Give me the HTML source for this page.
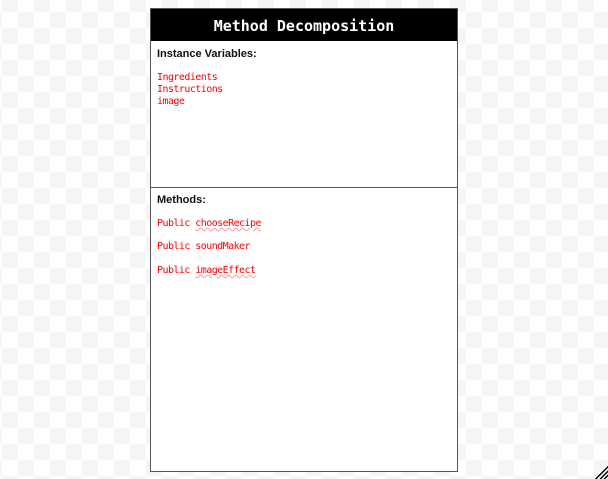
<!DOCTYPE html>
<html><head><style>
html,body{margin:0;padding:0}
body{width:608px;height:479px;position:relative;overflow:hidden;
background-color:#fff;
background-image:linear-gradient(45deg,#f5f5f5 25%,transparent 25%,transparent 75%,#f5f5f5 75%),linear-gradient(45deg,#f5f5f5 25%,transparent 25%,transparent 75%,#f5f5f5 75%);
background-size:32px 32px;background-position:2px 12px,18px 28px;}
.box{position:absolute;left:150px;top:8px;width:306px;height:462px;border:1px solid #555;background:#fff}
.hd{height:32px;background:#000;color:#fff;font:bold 15px "DejaVu Sans Mono","Liberation Mono",monospace;text-align:center;line-height:34px}
.sec{position:absolute;left:0;right:0;padding-left:6px}
.t{font:bold 11px "Liberation Sans",sans-serif;color:#111}
.r{font:10px "DejaVu Sans Mono","Liberation Mono",monospace;color:#f00;position:absolute;left:6px;letter-spacing:-0.55px}
.u{text-decoration:underline wavy #f99;text-decoration-thickness:1px}
.div{position:absolute;left:0;right:0;top:178px;border-top:1px solid #555}
.hatch{position:absolute;right:0;bottom:0;width:14px;height:14px;background:repeating-linear-gradient(135deg,#fff 0 1.5px,#000 1.5px 3px);clip-path:polygon(100% 0,100% 100%,0 100%)}
</style></head><body>
<div class="box">
<div class="hd">Method Decomposition</div>
<div class="sec t" style="top:39px">Instance Variables:</div>
<div class="r" style="top:63px">Ingredients</div>
<div class="r" style="top:75px">Instructions</div>
<div class="r" style="top:87px">image</div>
<div class="div"></div>
<div class="sec t" style="top:185px">Methods:</div>
<div class="r" style="top:209px">Public <span class="u">chooseRecipe</span></div>
<div class="r" style="top:232px">Public soundMaker</div>
<div class="r" style="top:256px">Public <span class="u">imageEffect</span></div>
</div>
<div class="hatch"></div>
</body></html>
